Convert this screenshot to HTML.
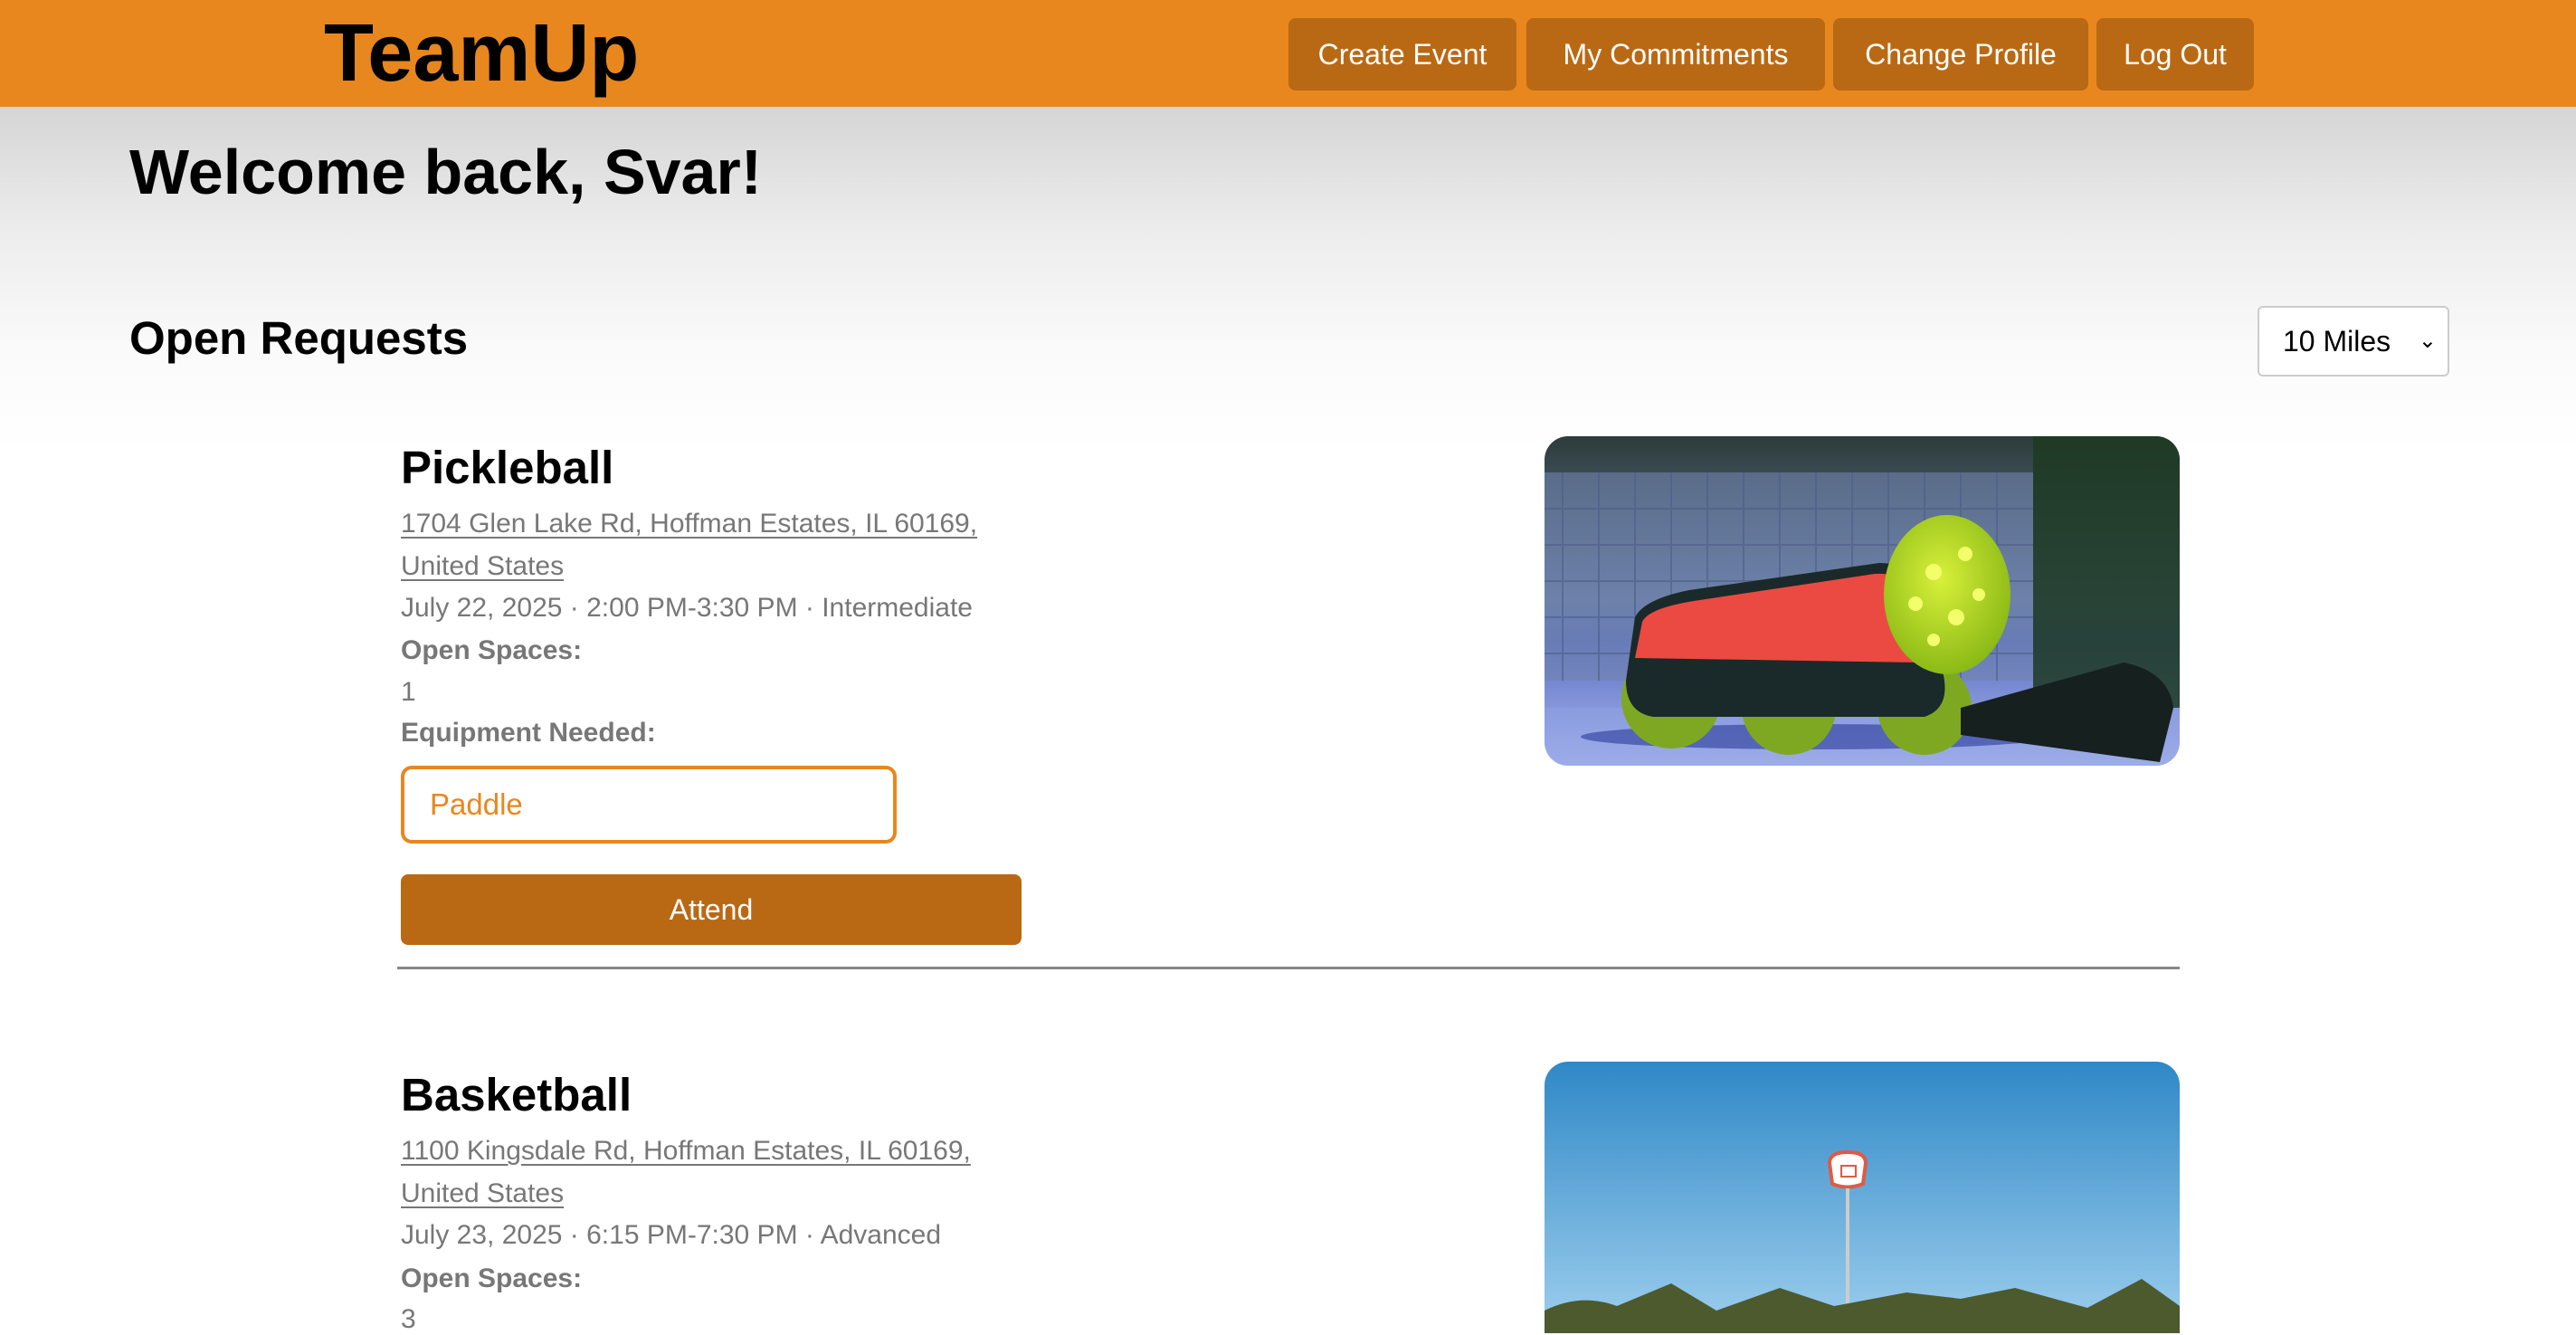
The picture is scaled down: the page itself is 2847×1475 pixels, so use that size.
<!DOCTYPE html>
<html><head><meta charset="utf-8">
<style>
*{margin:0;padding:0;box-sizing:border-box}
html,body{width:2847px;height:1460px;overflow:hidden;background:#fff;font-family:"Liberation Sans",Arial,sans-serif}
.hdr{position:absolute;left:0;top:0;width:2847px;height:118px;background:#E8871E}
.logo{position:absolute;left:358px;top:8px;font-size:90px;font-weight:bold;color:#000;letter-spacing:0px}
.nb{position:absolute;top:20px;height:80px;background:#B96914;color:#fff;border-radius:8px;font-size:32px;line-height:80px;text-align:center}
.bg{position:absolute;left:0;top:118px;width:2847px;height:380px;background:linear-gradient(#d5d5d5,#ececec 35%,#fafafa 70%,#fff)}
.abs{position:absolute;white-space:nowrap}
.g{color:#777;font-size:30px}
.u{text-decoration:underline;text-decoration-thickness:2px;text-underline-offset:5px}
.b{font-weight:bold}
</style></head><body>
<div class="hdr">
<div class="logo">TeamUp</div>
<div class="nb" style="left:1424px;width:252px">Create Event</div>
<div class="nb" style="left:1687px;width:330px">My Commitments</div>
<div class="nb" style="left:2026px;width:282px">Change Profile</div>
<div class="nb" style="left:2317px;width:174px">Log Out</div>
</div>
<div class="bg"></div>
<div class="abs b" style="left:143px;top:150px;font-size:70px">Welcome back, Svar!</div>
<div class="abs b" style="left:143px;top:344px;font-size:51px">Open Requests</div>
<div class="abs" style="left:2495px;top:338px;width:212px;height:78px;border:2px solid #ccc;border-radius:6px;background:#fff;font-size:32px;line-height:74px;padding-left:26px">10 Miles<span style="position:absolute;right:12px;top:0;font-size:24px">&#8964;</span></div>

<div class="abs b" style="left:443px;top:487px;font-size:51px">Pickleball</div>
<div class="abs g u" style="left:443px;top:562px">1704 Glen Lake Rd, Hoffman Estates, IL 60169,</div>
<div class="abs g u" style="left:443px;top:609px">United States</div>
<div class="abs g" style="left:443px;top:655px">July 22, 2025 · 2:00 PM-3:30 PM · Intermediate</div>
<div class="abs g b" style="left:443px;top:702px">Open Spaces:</div>
<div class="abs g" style="left:443px;top:748px">1</div>
<div class="abs g b" style="left:443px;top:793px">Equipment Needed:</div>
<div class="abs" style="left:443px;top:846px;width:548px;height:86px;border:4px solid #E8871E;border-radius:12px;color:#E8871E;font-size:33px;line-height:78px;padding-left:28px">Paddle</div>
<div class="abs" style="left:443px;top:966px;width:686px;height:78px;background:#B96914;border-radius:8px;color:#fff;font-size:32px;line-height:78px;text-align:center">Attend</div>
<div class="abs" style="left:439px;top:1068px;width:1970px;height:3px;background:#888"></div>

<svg class="abs" style="left:1707px;top:482px;border-radius:26px" width="702" height="364" viewBox="0 0 702 364">
<defs>
<linearGradient id="sk" x1="0" y1="0" x2="0" y2="1"><stop offset="0" stop-color="#2c3b3a"/><stop offset=".5" stop-color="#6a7ea6"/><stop offset=".62" stop-color="#5c6fc4"/><stop offset="1" stop-color="#a9b9ec"/></linearGradient>
<radialGradient id="bl" cx=".45" cy=".4" r=".6"><stop offset="0" stop-color="#d8f03a"/><stop offset="1" stop-color="#8cba16"/></radialGradient>
</defs>
<rect width="702" height="364" fill="url(#sk)"/>
<rect x="540" y="0" width="162" height="300" fill="#1d3a22" opacity=".85"/>
<rect x="0" y="40" width="540" height="230" fill="#7084ad" opacity=".6"/>
<g stroke="#4c5e8a" stroke-width="2" opacity=".6">
<path d="M0 80H540M0 120H540M0 160H540M0 200H540M0 240H540M20 40V270M60 40V270M100 40V270M140 40V270M180 40V270M220 40V270M260 40V270M300 40V270M340 40V270M380 40V270M420 40V270M460 40V270M500 40V270"/></g>
<rect x="0" y="300" width="702" height="64" fill="#8fa0e6" opacity=".5"/>
<ellipse cx="300" cy="332" rx="260" ry="14" fill="#2a3a9a" opacity=".6"/>
<circle cx="140" cy="290" r="55" fill="#7fa822"/>
<circle cx="270" cy="300" r="52" fill="#7fa822"/>
<circle cx="420" cy="300" r="52" fill="#7fa822"/>
<path d="M90 270 L100 200 Q110 180 160 170 L370 140 Q400 140 420 160 L440 260 Q450 300 420 310 L120 310 Q90 305 90 270Z" fill="#1a2a2a"/>
<path d="M100 245 L108 205 Q115 190 165 182 L365 152 Q395 150 405 170 L415 250 Z" fill="#ea4a42"/>
<path d="M460 300 L640 250 Q690 260 695 300 L680 360 L460 330Z" fill="#15201f"/>
<ellipse cx="445" cy="175" rx="70" ry="88" fill="url(#bl)"/>
<g fill="#f3ff6a"><circle cx="430" cy="150" r="9"/><circle cx="465" cy="130" r="8"/><circle cx="410" cy="185" r="8"/><circle cx="455" cy="200" r="9"/><circle cx="480" cy="175" r="7"/><circle cx="430" cy="225" r="7"/></g>
</svg>

<div class="abs b" style="left:443px;top:1180px;font-size:51px">Basketball</div>
<div class="abs g u" style="left:443px;top:1255px">1100 Kingsdale Rd, Hoffman Estates, IL 60169,</div>
<div class="abs g u" style="left:443px;top:1302px">United States</div>
<div class="abs g" style="left:443px;top:1348px">July 23, 2025 · 6:15 PM-7:30 PM · Advanced</div>
<div class="abs g b" style="left:443px;top:1396px">Open Spaces:</div>
<div class="abs g" style="left:443px;top:1441px">3</div>

<svg class="abs" style="left:1707px;top:1173px;border-radius:26px 26px 0 0" width="702" height="300" viewBox="0 0 702 300">
<defs><linearGradient id="sb" x1="0" y1="0" x2="0" y2="1"><stop offset="0" stop-color="#2f88c6"/><stop offset="1" stop-color="#9ecfee"/></linearGradient></defs>
<rect width="702" height="300" fill="url(#sb)"/>
<path d="M315 112 Q315 100 335 100 Q355 100 355 112 L352 135 Q335 142 318 135Z" fill="#fff" stroke="#e05a45" stroke-width="4"/>
<rect x="328" y="115" width="16" height="12" fill="none" stroke="#e05a45" stroke-width="2"/>
<rect x="333" y="140" width="4" height="160" fill="#ccc"/>
<path d="M0 300 L0 275 Q40 255 80 270 L140 245 L190 275 L260 250 L320 270 L400 255 L460 262 L520 250 L600 272 L660 240 L702 270 L702 300Z" fill="#4c5a2e"/>
</svg>
</body></html>
